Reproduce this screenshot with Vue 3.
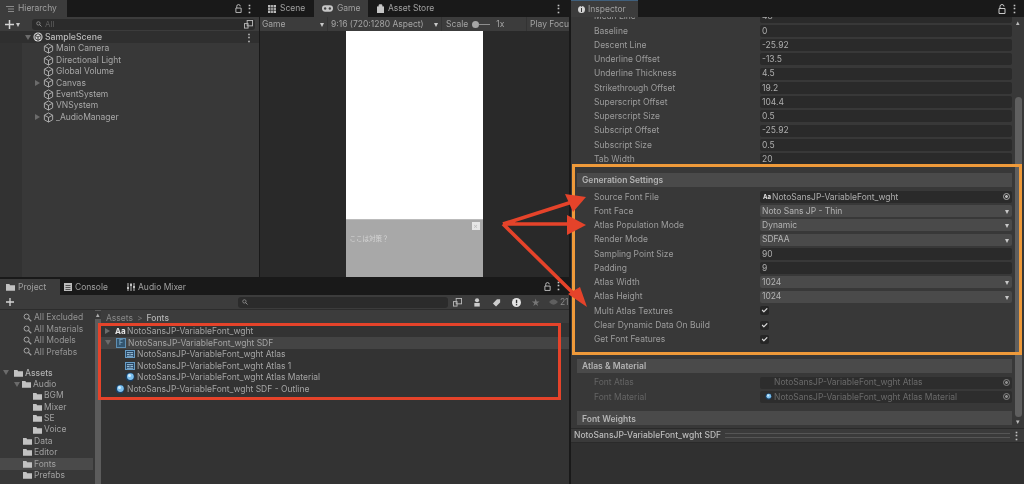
<template>
  <div class="editor">
    <svg class="defs" width="0" height="0">
      <symbol id="cube" viewBox="0 0 12 12">
        <path d="M6 1l4.500 2.500v5L6 11 1.500 8.500v-5zM1.500 3.500L6 6l4.500-2.500M6 6v5" fill="none" stroke="#b4b4b4" stroke-width="1" />
      </symbol>
      <symbol id="folder" viewBox="0 0 12 10">
        <path d="M0 1h4.500l1 1.500H12V10H0z" fill="#c2c2c2" />
      </symbol>
      <symbol id="lens" viewBox="0 0 10 10">
        <circle cx="4" cy="4" r="2.800" fill="none" stroke="#a5a5a5" stroke-width="1.100" />
        <path d="M6 6l3.200 3.200" stroke="#a5a5a5" stroke-width="1.300" />
      </symbol>
      <symbol id="ball" viewBox="0 0 10 10">
        <circle cx="5" cy="5" r="4.500" fill="#1b3f63" />
        <circle cx="5.400" cy="4.600" r="3.400" fill="#7cc0ee" />
        <circle cx="4.500" cy="3.600" r="1.500" fill="#d2ecfb" />
      </symbol>
      <symbol id="tex" viewBox="0 0 11 9">
        <rect x=".5" y=".5" width="10" height="8" fill="#24425f" stroke="#6fa9d6" />
        <path d="M2 3h7M2 5h3M6 5h3M2 7h7" stroke="#a9d3ef" />
      </symbol>
      <symbol id="lock" viewBox="0 0 8 10">
        <path d="M2 4.500V2.500a2 2 0 0 1 4 0M1 4.500h6v5H1z" fill="none" stroke="#c8c8c8" stroke-width="1" />
      </symbol>
      <symbol id="cross" viewBox="0 0 9 9">
        <path d="M4.500 0v9M0 4.500h9" stroke="#d4d4d4" stroke-width="1.500" />
      </symbol>
      <symbol id="pick" viewBox="0 0 10 10">
        <rect x="3.500" y=".5" width="6" height="6" fill="none" stroke="#bbb" />
        <rect x=".5" y="4" width="4" height="5" fill="none" stroke="#bbb" />
      </symbol>
    </svg>

    <div class="left">
      <div class="top">
        <section class="hierarchy">
          <div class="tabs">
            <div class="tab on h-tab">
              <svg class="glyph" viewBox="0 0 8 8"><path d="M0 1.500h8M2 4h6M2 6.500h6" stroke="#8a8a8a" /></svg>
              Hierarchy
            </div>
            <div class="tab-tools">
              <svg class="lock"><use href="#lock" /></svg>
              <span class="dots">⋮</span>
            </div>
          </div>
          <div class="bar">
            <svg class="plus"><use href="#cross" /></svg><span class="caret small">▾</span>
            <div class="search"><svg class="lens"><use href="#lens" /></svg>All<svg class="pick"><use href="#pick" /></svg></div>
          </div>
          <div class="tree">
            <div class="scene-row">
              <span class="tri down"></span>
              <svg class="scene-ico" viewBox="0 0 12 12"><circle cx="6" cy="6" r="5.500" fill="#d4d4d4" /><path d="M6 2l3.500 2v4L6 10 2.500 8V4zM6 6v4M2.500 4L6 6l3.500-2" fill="none" stroke="#333" stroke-width="1.100" /></svg>
              <b>SampleScene</b>
              <span class="dots scene-dots">⋮</span>
            </div>
            <div v-for="n in nodes" :key="n.name" class="node">
              <span class="tri" :class="{ hidden: !n.kids }"></span>
              <svg class="cube"><use href="#cube" /></svg>{{ n.name }}
            </div>
          </div>
        </section>

        <section class="game">
          <div class="tabs">
            <div class="tab plain">
              <svg class="glyph" viewBox="0 0 8 8"><path d="M0 0h8v8H0z" fill="#bcbcbc" /><path d="M0 2.700h8M0 5.300h8M2.700 0v8M5.300 0v8" stroke="#222" stroke-width=".7" /></svg>
              Scene
            </div>
            <div class="tab on"><svg class="pad" viewBox="0 0 14 8"><rect width="14" height="8" rx="4" fill="#c6c6c6" /><circle cx="4" cy="4" r="1.500" fill="#444" /><circle cx="10" cy="4" r="1.500" fill="#444" /></svg>Game</div>
            <div class="tab plain"><svg class="bag" viewBox="0 0 8 10"><path d="M0 3h8v7H0zM2 3V2a2 2 0 0 1 4 0v1" fill="#c6c6c6" stroke="#c6c6c6" stroke-width=".6" /></svg>Asset Store</div>
            <span class="dots game-dots">⋮</span>
          </div>
          <div class="bar game-bar">
            <div class="g-item g-display">Game<span class="caret">▾</span></div>
            <div class="g-item g-aspect">9:16 (720:1280 Aspect)<span class="caret">▾</span></div>
            <div class="g-item g-scale">Scale<i class="knob"></i><i class="line"></i><span class="x">1x</span></div>
            <div class="g-item g-play">Play Focu</div>
          </div>
          <div class="view">
            <div class="phone">
              <div class="white"></div>
              <div class="dialog">
                <span class="close">×</span>
                <p>ここは対策？</p>
              </div>
            </div>
          </div>
        </section>
      </div>

      <section class="project">
        <div class="tabs p-tabs">
          <div class="tab on"><svg class="folder"><use href="#folder" /></svg>Project</div>
          <div class="tab plain">
            <svg class="glyph" viewBox="0 0 8 8"><path d="M0 0h8v8H0z" fill="#bcbcbc" /><path d="M1.500 2.500h5M1.500 4.500h5M1.500 6.500h5" stroke="#222" stroke-width=".7" /></svg>
            Console
          </div>
          <div class="tab plain">
            <svg class="glyph" viewBox="0 0 8 8"><path d="M1 0v8M4 0v8M7 0v8" stroke="#bcbcbc" /><path d="M0 5h2M3 2h2M6 4h2" stroke="#e0e0e0" stroke-width="1.400" /></svg>
            Audio Mixer
          </div>
          <div class="tab-tools p-tools">
            <svg class="lock"><use href="#lock" /></svg>
            <span class="dots">⋮</span>
          </div>
        </div>
        <div class="bar p-bar">
          <svg class="plus p-plus"><use href="#cross" /></svg>
          <div class="p-search"><svg class="lens"><use href="#lens" /></svg></div>
          <div class="p-icons">
            <svg><use href="#pick" /></svg>
            <svg viewBox="0 0 10 10"><circle cx="4.500" cy="2.500" r="2.300" fill="#ccc" /><path d="M1.500 5.500h6v4h-6z" fill="#ccc" /></svg>
            <svg viewBox="0 0 10 10"><path d="M1 6l4.500-4.500H9V5L4.500 9.500z" fill="#ccc" /></svg>
            <svg viewBox="0 0 10 10"><circle cx="5" cy="5" r="5" fill="#e4e4e4" /><rect x="4.300" y="2" width="1.500" height="3.800" fill="#333" /><rect x="4.300" y="6.700" width="1.500" height="1.500" fill="#333" /></svg>
            <span class="star">★</span>
            <span class="hid"><svg class="eye" viewBox="0 0 10 6"><path d="M0 3q5-6 10 0q-5 6-10 0z" fill="#5f5f5f" /></svg>21</span>
          </div>
        </div>
        <div class="p-body">
          <aside class="side">
            <div class="fav-gap"></div>
            <div v-for="f in favs" :key="f" class="s-row fav"><svg class="lens big"><use href="#lens" /></svg>{{ f }}</div>
            <div class="s-gap"></div>
            <div class="s-row root"><span class="tri down"></span><svg class="folder"><use href="#folder" /></svg>Assets</div>
            <div
              v-for="f in folders"
              :key="f.name"
              class="s-row"
              :class="[`lvl${f.lvl}`, { sel: f.sel }]"
            >
              <span v-if="f.open" class="tri down"></span>
              <svg class="folder"><use href="#folder" /></svg>{{ f.name }}
            </div>
          </aside>
          <div class="splitter"><span class="up">▴</span></div>
          <div class="files">
            <div class="crumbs">Assets <em>&gt;</em> <b>Fonts</b></div>
            <div class="list">
              <div class="file first"><span class="tri"></span><b class="aa">Aa</b>NotoSansJP-VariableFont_wght</div>
              <div class="file first sel"><span class="tri down"></span><span class="f-ico">F</span>NotoSansJP-VariableFont_wght SDF</div>
              <div class="file sub"><svg class="tex"><use href="#tex" /></svg>NotoSansJP-VariableFont_wght Atlas</div>
              <div class="file sub"><svg class="tex"><use href="#tex" /></svg>NotoSansJP-VariableFont_wght Atlas 1</div>
              <div class="file sub"><svg class="ball"><use href="#ball" /></svg>NotoSansJP-VariableFont_wght Atlas Material</div>
              <div class="file outline"><svg class="ball"><use href="#ball" /></svg>NotoSansJP-VariableFont_wght SDF - Outline</div>
            </div>
          </div>
        </div>
      </section>
    </div>

    <section class="inspector">
      <div class="tabs">
        <div class="tab on i-tab"><span class="info">i</span>Inspector</div>
        <div class="tab-tools i-tools">
          <svg class="lock big"><use href="#lock" /></svg>
          <span class="dots">⋮</span>
        </div>
      </div>
      <div class="i-main">
        <div class="i-scroll">
          <div class="i-content">
            <div v-for="r in metrics" :key="r[0]" class="row">
              <label>{{ r[0] }}</label>
              <div class="field">{{ r[1] }}</div>
            </div>

            <div class="head gen">Generation Settings</div>
            <div class="rows-gap"></div>
            <div v-for="r in settings" :key="r.label" class="row">
              <label>{{ r.label }}</label>
              <div v-if="r.type === 'obj'" class="field obj"><b class="aa tiny">Aa</b>{{ r.value }}<span class="target"></span></div>
              <div v-else-if="r.type === 'select'" class="select">{{ r.value }}<span class="caret">▾</span></div>
              <div v-else-if="r.type === 'check'" class="check">✓</div>
              <div v-else class="field">{{ r.value }}</div>
            </div>

            <div class="head atlas">Atlas &amp; Material</div>
            <div class="rows-gap"></div>
            <div class="row off">
              <label>Font Atlas</label>
              <div class="field obj"><i class="blank"></i>NotoSansJP-VariableFont_wght Atlas<span class="target"></span></div>
            </div>
            <div class="row off">
              <label>Font Material</label>
              <div class="field obj"><svg class="ball mini"><use href="#ball" /></svg>NotoSansJP-VariableFont_wght Atlas Material<span class="target"></span></div>
            </div>
            <div class="head weights">Font Weights</div>
          </div>
          <div class="scrollbar">
            <span class="sb-arrow">▴</span>
            <div class="thumb"></div>
            <span class="sb-arrow">▾</span>
          </div>
        </div>
        <div class="i-foot">
          <span>NotoSansJP-VariableFont_wght SDF</span>
          <i class="rule"></i>
          <span class="dots">⋮</span>
        </div>
        <div class="i-empty"></div>
      </div>
    </section>

    <!-- annotations drawn over the screenshot -->
    <div class="mark mark-red"></div>
    <div class="mark mark-orange"></div>
    <svg class="arrows" width="1024" height="484" viewBox="0 0 1024 484">
      <g stroke="#e5432a" stroke-width="3.600" fill="none">
        <path d="M503 224L572 202M503 224H570M503 224L574 294" />
      </g>
      <g fill="#e5432a">
        <path d="M586 197L565 194L573 212z" />
        <path d="M586 225L567 215V235z" />
        <path d="M587 307L580 287L568 294z" />
      </g>
    </svg>
  </div>
</template>

<script setup>
const nodes = [
  { name: 'Main Camera' },
  { name: 'Directional Light' },
  { name: 'Global Volume' },
  { name: 'Canvas', kids: true },
  { name: 'EventSystem' },
  { name: 'VNSystem' },
  { name: '_AudioManager', kids: true },
]

const favs = ['All Excluded', 'All Materials', 'All Models', 'All Prefabs']

const folders = [
  { name: 'Audio', lvl: 1, open: true },
  { name: 'BGM', lvl: 2 },
  { name: 'Mixer', lvl: 2 },
  { name: 'SE', lvl: 2 },
  { name: 'Voice', lvl: 2 },
  { name: 'Data', lvl: 1 },
  { name: 'Editor', lvl: 1 },
  { name: 'Fonts', lvl: 1, sel: true },
  { name: 'Prefabs', lvl: 1 },
]

const metrics = [
  ['Mean Line', '48'],
  ['Baseline', '0'],
  ['Descent Line', '-25.92'],
  ['Underline Offset', '-13.5'],
  ['Underline Thickness', '4.5'],
  ['Strikethrough Offset', '19.2'],
  ['Superscript Offset', '104.4'],
  ['Superscript Size', '0.5'],
  ['Subscript Offset', '-25.92'],
  ['Subscript Size', '0.5'],
  ['Tab Width', '20'],
]

const settings = [
  { label: 'Source Font File', type: 'obj', value: 'NotoSansJP-VariableFont_wght' },
  { label: 'Font Face', type: 'select', value: 'Noto Sans JP - Thin' },
  { label: 'Atlas Population Mode', type: 'select', value: 'Dynamic' },
  { label: 'Render Mode', type: 'select', value: 'SDFAA' },
  { label: 'Sampling Point Size', type: 'text', value: '90' },
  { label: 'Padding', type: 'text', value: '9' },
  { label: 'Atlas Width', type: 'select', value: '1024' },
  { label: 'Atlas Height', type: 'select', value: '1024' },
  { label: 'Multi Atlas Textures', type: 'check' },
  { label: 'Clear Dynamic Data On Build', type: 'check' },
  { label: 'Get Font Features', type: 'check' },
]
</script>

<style>
html, body { margin: 0; background: #191919; overflow: hidden; }
</style>

<style scoped>
.editor {
  position: relative;
  width: 1024px;
  height: 484px;
  display: flex;
  overflow: hidden;
  background: #191919;
  color: #adadad;
  font: 8.500px/1 Inter, "Noto Sans CJK JP", sans-serif;
  filter: blur(.35px);
}
.defs { position: absolute; }
svg { flex: none; }
p { margin: 0; }

.left { width: 569px; display: flex; flex-direction: column; flex: none; }
.top { height: 277px; display: flex; flex: none; }

.tabs { height: 17px; display: flex; align-items: stretch; background: #191919; flex: none; }
.tab { display: flex; align-items: center; gap: 4px; padding: 0 6px; font-size: 8.500px; color: #a0a0a0; }
.tab.on { background: #3c3c3c; }
.tab-tools { margin-left: auto; display: flex; align-items: center; gap: 5px; padding-right: 8px; }
.h-tab { width: 67px; box-sizing: border-box; }
.glyph { width: 8px; height: 8px; }
.dots { font-size: 11px; font-weight: 700; color: #c4c4c4; width: 4px; text-align: center; line-height: 10px; display: flex; justify-content: center; }
.lock { width: 7px; height: 9px; }
.lock.big { width: 8px; height: 10px; }
.bar { height: 14px; background: #3c3c3c; display: flex; align-items: center; flex: none; }
.plus { width: 9px; height: 9px; margin-left: 5px; }
.caret { color: #c8c8c8; font-size: 8px; }
.caret.small { margin-left: 2px; width: 16px; }

.hierarchy { width: 259px; display: flex; flex-direction: column; flex: none; background: #383838; }
.search {
  width: 223px; height: 11px; background: #2b2b2b; border-radius: 3px;
  display: flex; align-items: center; color: #5e5e5e; font-size: 8px;
}
.lens { width: 6px; height: 6px; margin: 0 3px 0 4px; }
.lens.big { width: 9px; height: 9px; margin: 0; }
.pick { width: 9px; height: 9px; margin-left: auto; margin-right: 2px; }
.tree { flex: 1; border-left: 22px solid #323232; }
.scene-row {
  height: 12px; margin-left: -22px; background: #2f2f2f; display: flex; align-items: center;
  padding-left: 25px; color: #bcbcbc; position: relative;
}
.scene-row b { font-weight: 500; font-size: 8.700px; margin-left: 2px; }
.scene-ico { width: 10px; height: 10px; margin-left: 2px; }
.scene-dots { margin-left: auto; margin-right: 8px; font-size: 10px; }
.tri { width: 0; height: 0; border-left: 5px solid #6b6b6b; border-top: 3.500px solid transparent; border-bottom: 3.500px solid transparent; flex: none; }
.tri.down { border-left: 3.500px solid transparent; border-right: 3.500px solid transparent; border-top: 5px solid #6b6b6b; border-bottom: 0; }
.tri.hidden { visibility: hidden; }
.node { height: 11.400px; display: flex; align-items: center; padding-left: 13px; color: #a8a8a8; }
.cube { width: 11px; height: 11px; margin: 0 2px 0 3px; }

.game { flex: 1; display: flex; flex-direction: column; border-left: 1px solid #191919; min-width: 0; }
.game .tab { padding: 0 7px 0 8px; width: 54px; box-sizing: border-box; }
.game .tab.plain:nth-child(3) { width: auto; padding-left: 9px; }
.pad { width: 11px; height: 7px; }
.bag { width: 7px; height: 9px; }
.game-dots { margin-left: auto; margin-right: 9px; align-self: center; }
.game-bar { background: #333; gap: 1px; }
.g-item { height: 100%; background: #3c3c3c; display: flex; align-items: center; box-sizing: border-box; padding-left: 2px; color: #a4a4a4; flex: none; }
.g-item .caret { margin-left: auto; margin-right: 3px; }
.g-display { width: 67px; }
.g-aspect { width: 113px; padding-left: 3px; }
.g-scale { width: 84px; padding-left: 4px; }
.g-play { flex: 1; min-width: 0; overflow: hidden; white-space: nowrap; padding-left: 3px; }
.knob { width: 7px; height: 7px; background: #a6a6a6; border-radius: 50%; margin-left: 4px; }
.line { width: 11px; height: 1px; background: #8e8e8e; }
.x { margin-left: 6px; }
.view { flex: 1; background: #292929; display: flex; justify-content: center; }
.phone { width: 137px; display: flex; flex-direction: column; margin-left: 1px; margin-right: 2px; }
.white { height: 188px; background: #fff; }
.dialog { flex: 1; background: #a8a8a8; position: relative; border-top: 1px solid #bbb; box-sizing: border-box; }
.close { position: absolute; right: 3px; top: 2px; width: 8px; height: 8px; background: #e6e6e6; color: #bbb; font-size: 7px; line-height: 8px; text-align: center; }
.dialog p { margin: 16px 0 0 4px; font-size: 6.500px; color: #d6d6d6; }

.project { flex: 1; display: flex; flex-direction: column; min-height: 0; background: #383838; }
.p-tabs { height: 18px; }
.p-tabs .tab { margin-top: 2px; padding: 0 0 0 6px; gap: 3px; width: 60px; box-sizing: border-box; }
.p-tabs .tab.plain { padding: 0 0 0 4px; margin-left: 0; }
.p-tabs .tab.plain:nth-child(3) { width: auto; margin-left: 3px; }
.folder { width: 9px; height: 8px; }
.p-tools { padding-right: 9px; }
.p-bar { height: 15px; position: relative; border-bottom: 1px solid #2c2c2c; box-sizing: border-box; }
.p-plus { margin-left: 6px; width: 8px; height: 8px; }
.p-search { margin-left: 224px; width: 210px; height: 11px; background: #2b2b2b; border-radius: 3px; display: flex; align-items: center; }
.p-icons { display: flex; align-items: center; margin-left: 5px; gap: 10.500px; }
.p-icons > svg { width: 9px; height: 9px; }
.star { color: #777; font-size: 9px; }
.hid { color: #8a8a8a; display: flex; align-items: center; gap: 2px; margin-left: -2px; }
.eye { width: 9px; height: 6px; }
.p-body { flex: 1; display: flex; min-height: 0; }
.side { width: 95px; flex: none; background: #383838; color: #a0a0a0; overflow: hidden; }
.fav-gap { height: 2px; }
.s-row { height: 11.400px; display: flex; align-items: center; gap: 2px; }
.fav { padding-left: 23px; color: #949494; }
.s-gap { height: 9.500px; }
.root { padding-left: 3px; font-weight: 500; color: #b0b0b0; }
.root .folder { margin-left: 3px; }
.lvl1 { padding-left: 23px; }
.lvl1:has(.tri) { padding-left: 14px; }
.lvl2 { padding-left: 33px; }
.s-row.sel { background: #4a4a4a; margin-right: 2px; }
.splitter { width: 6px; flex: none; background: #5c5c5c; position: relative; }
.up { position: absolute; left: 0; top: 1px; width: 6px; height: 8px; background: #383838; text-align: center; font-size: 7px; line-height: 7px; }
.files { flex: 1; background: #333; display: flex; flex-direction: column; }
.crumbs { height: 13px; background: #3c3c3c; padding: 3px 0 0 5px; box-sizing: border-box; display: flex; align-items: center; gap: 4px; color: #888; }
.crumbs em { font-style: normal; color: #777; }
.crumbs b { font-weight: 500; color: #b4b4b4; }
.file { height: 11.500px; display: flex; align-items: center; gap: 2px; color: #a4a4a4; }
.list { padding-top: 2.500px; }
.first { padding-left: 4px; }
.file.sel { background: #444; }
.sub { padding-left: 24px; }
.outline { padding-left: 14px; }
.aa { color: #e4e4e4; font-weight: 700; font-size: 8px; margin-left: 3px; width: 10px; }
.f-ico { width: 10px; height: 10px; margin-left: 3px; background: #33556f; border: 1px solid #5f8fb3; color: #8fc0e0; font-size: 7px; line-height: 8px; text-align: center; box-sizing: border-box; }
.tex { width: 10px; height: 8px; }
.ball { width: 10px; height: 10px; }
.ball.mini { width: 7px; height: 7px; margin-left: 3px; }

.inspector { flex: 1; display: flex; flex-direction: column; min-width: 0; border-left: 2px solid #191919; box-sizing: border-box; }
.i-tab { width: 67px; box-sizing: border-box; padding-left: 7px; gap: 3px; border-top: 1px solid #3f5f7c; }
.info { width: 7px; height: 7px; border-radius: 50%; background: #d4d4d4; color: #222; font-size: 6px; font-weight: 700; line-height: 7px; text-align: center; }
.i-tools { gap: 6px; padding-right: 8px; }
.i-main { flex: 1; display: flex; flex-direction: column; background: #383838; min-height: 0; }
.i-scroll { height: 411px; display: flex; overflow: hidden; flex: none; }
.i-content { flex: 1; min-width: 0; padding: 0 0 0 6px; margin-top: -7.600px; }
.row { height: 14.250px; display: grid; grid-template-columns: 166px 1fr; padding-left: 17px; align-items: center; color: #9c9c9c; }
.field { height: 12px; background: #2a2a2a; border-radius: 2px; display: flex; align-items: center; padding-left: 2px; color: #aeaeae; }
.select { height: 12px; background: #4a4a4a; border-radius: 2px; display: flex; align-items: center; padding-left: 2px; color: #b4b4b4; }
.select .caret { margin-left: auto; margin-right: 3px; }
.obj { gap: 2px; position: relative; }
.tiny { font-size: 6px; margin: 0 0 0 1px; width: 7px; }
.target { width: 7px; height: 7px; border: 1px solid #aaa; border-radius: 50%; margin-left: auto; margin-right: 2px; box-sizing: border-box; background: radial-gradient(circle, #bbb 1.300px, transparent 1.500px); }
.check { width: 9px; height: 9px; background: #262626; border-radius: 2px; color: #e0e0e0; font-size: 8px; line-height: 9px; text-align: center; font-weight: 700; }
.head { height: 13.500px; background: #4a4a4a; padding-left: 5px; display: flex; align-items: center; font-weight: 600; color: #b4b4b4; }
.gen { margin-top: 7.200px; padding-top: 1px; box-sizing: border-box; }
.rows-gap { height: 3px; }
.atlas { margin-top: 12.500px; padding-top: 1px; box-sizing: border-box; }
.off { color: #646464; }
.off .field { background: #2d2d2d; color: #6a6a6a; }
.off .target { opacity: .7; }
.blank { width: 10px; }
.weights { margin-top: 7px; padding-top: 2px; box-sizing: border-box; }
.scrollbar { width: 12px; flex: none; background: #383838; display: flex; flex-direction: column; align-items: center; }
.sb-arrow { font-size: 7px; height: 9px; line-height: 9px; color: #bbb; }
.scrollbar .sb-arrow:first-child { margin-top: 1px; }
.thumb { width: 7px; height: 320px; margin-top: 70px; background: #5f5f5f; border-radius: 4px; }
.i-foot { height: 15px; flex: none; background: #3a3a3a; border-top: 1px solid #2a2a2a; border-bottom: 1px solid #2a2a2a; box-sizing: border-box; display: flex; align-items: center; padding: 0 6px 0 3px; color: #bcbcbc; font-weight: 500; gap: 4px; }
.rule { flex: 1; height: 3px; border-top: 1px solid #555; border-bottom: 1px solid #555; }
.i-empty { flex: 1; background: #303030; }

.mark { position: absolute; box-sizing: border-box; pointer-events: none; }
.mark-red { left: 98px; top: 323px; width: 463px; height: 77px; border: 3.500px solid #e5432a; }
.mark-orange { left: 572px; top: 164px; width: 450px; height: 191px; border: 3.500px solid #ef9a3a; }
.arrows { position: absolute; left: 0; top: 0; pointer-events: none; }
</style>
